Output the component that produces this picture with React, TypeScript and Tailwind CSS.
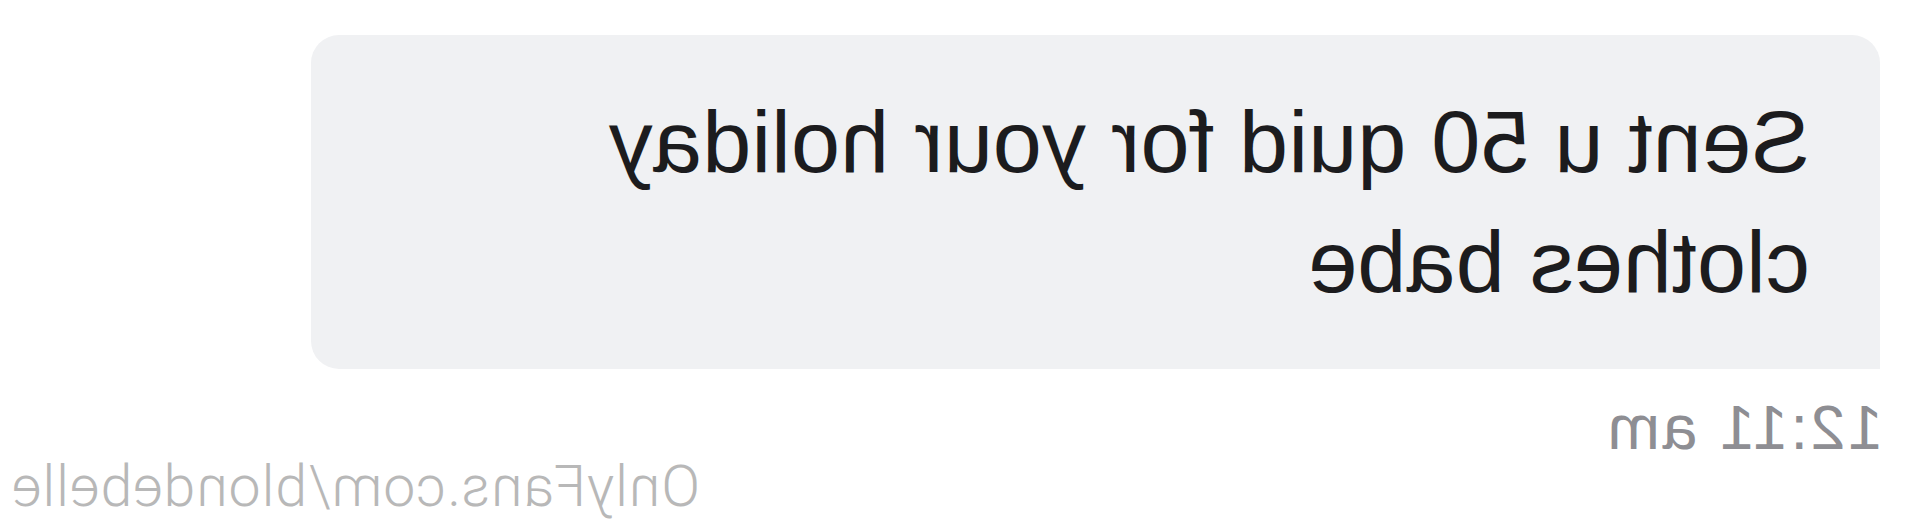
import React from 'react';

// Single received chat message with its time and a footer credit.
// The whole view is rendered mirrored left-to-right.

const sans = "font-['Liberation_Sans',Arial,sans-serif]";

const MessageBubble: React.FC<{ text: string }> = ({ text }) => (
  <div
    className={`ml-[40px] w-[1569px] rounded-[28px] rounded-bl-none bg-[#f0f1f3] pl-[70px] pr-[80px] py-[47px] ${sans} text-[88px] leading-[120px] tracking-[0.25px] text-[#1c1c1e]`}
  >
    {text}
  </div>
);

const App: React.FC = () => {
  return (
    <div className="w-[1920px] h-[530px] overflow-hidden bg-white">
      <div className="-scale-x-100 w-full h-full pt-[35px]">
        <MessageBubble text="Sent u 50 quid for your holiday clothes babe" />

        {/* Sent time */}
        <div className={`mt-[27px] pl-[37px] ${sans} text-[63px] leading-[63px] tracking-[2.5px] text-[#8e8e93]`}>
          12:11 am
        </div>

        {/* Footer credit */}
        <div className="flex justify-end pr-[11px]">
          <span className="font-['Roboto',sans-serif] font-light text-[57px] leading-[56px] tracking-[1px] text-[#b8b8b8]">
            OnlyFans.com/blondebelle
          </span>
        </div>
      </div>
    </div>
  );
};

export default App;
